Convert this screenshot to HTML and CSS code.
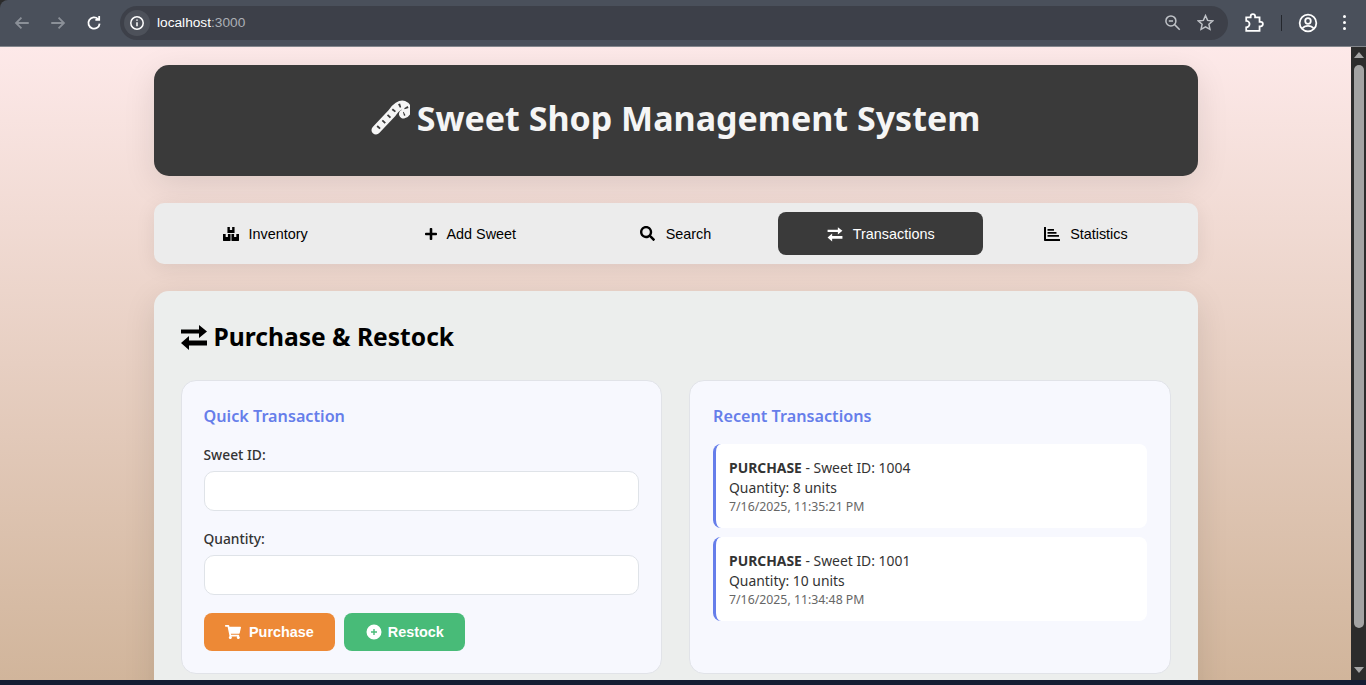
FILE: index.html
```html
<!doctype html>
<html>
<head>
<meta charset="utf-8">
<title>Sweet Shop Management System</title>
<link rel="stylesheet" href="styles.css">
</head>
<body>

<!-- browser toolbar -->
<div class="toolbar">
	<svg class="tb-icon dim" viewBox="0 0 16 16"><path d="M14 8H3M7.500 3.200 2.700 8l4.800 4.800"/></svg>
	<svg class="tb-icon dim" viewBox="0 0 16 16"><path d="M2 8h11M8.500 3.200 13.300 8l-4.800 4.800"/></svg>
	<svg class="tb-icon" viewBox="0 0 16 16"><path d="M13 8.500A5 5 0 1 1 11.600 4.500M12.600 1.800v3.400H9.200"/></svg>
	<div class="omnibox">
		<span class="site-info"><svg viewBox="0 0 16 16"><circle cx="8" cy="8" r="6.200"/><path d="M8 7.200v4M8 4.400v1.400"/></svg></span>
		<span class="url">localhost<span class="port">:3000</span></span>
		<svg class="omni-icon" viewBox="0 0 16 16"><circle cx="6.500" cy="6.500" r="4.700"/><path d="M4.500 6.500h4M10 10l4.800 4.800"/></svg>
		<svg class="omni-icon star" viewBox="0 0 16 16"><path d="M8 1.500l2 4.500 4.800.5-3.600 3.200 1 4.800L8 12.100 3.800 14.500l1-4.800L1.200 6.500 6 6z"/></svg>
	</div>
	<svg class="tb-icon ext" viewBox="0 0 18 18"><path d="M2 4h4V3a2 2 0 0 1 4 0v1h4v4h1a2 2 0 0 1 0 4h-1v4H2v-3a2 2 0 0 0 0-6z"/></svg>
	<span class="tb-sep"></span>
	<svg class="tb-icon ext" viewBox="0 0 18 18"><circle cx="9" cy="9" r="7.500"/><circle cx="9" cy="7.200" r="2.500"/><path d="M3.800 14c1.500-2 3.200-2.500 5.200-2.500s3.700.5 5.200 2.500"/></svg>
	<span class="dots"><i></i><i></i><i></i></span>
</div>

<div class="viewport">
	<div class="page">
		<div class="container">

			<header class="banner">
				<h1>
					<svg class="cane" viewBox="5 5 40 40">
						<path class="cane-body" d="M11 37 27 20C30 15 36 10 40 13 43 16 42 20 38.500 21"/>
						<path class="cane-stripe" d="M13 35 27 20C30 15 36 10 40 13 43 16 42 20 38.500 21"/>
					</svg>
					Sweet Shop Management System
				</h1>
			</header>

			<nav class="tabs">
				<button class="tab">
					<svg viewBox="0 0 18 16"><path d="M5 0h8v7H5zM7.700 0v3.500h2.600V0zM0 8h8.500v7a1 1 0 0 1-1 1H1a1 1 0 0 1-1-1zM3 8v3.500h2.500V8zM9.500 8H18v7a1 1 0 0 1-1 1h-6.500a1 1 0 0 1-1-1zM12.500 8v3.500H15V8z" fill-rule="evenodd"/></svg>
					Inventory
				</button>
				<button class="tab">
					<svg class="plus" viewBox="0 0 448 512"><path d="M416 208H272V64c0-17.670-14.330-32-32-32h-32c-17.670 0-32 14.330-32 32v144H32c-17.670 0-32 14.330-32 32v32c0 17.670 14.330 32 32 32h144v144c0 17.670 14.330 32 32 32h32c17.670 0 32-14.330 32-32V304h144c17.670 0 32-14.330 32-32v-32c0-17.670-14.330-32-32-32z"/></svg>
					Add Sweet
				</button>
				<button class="tab">
					<svg class="lens" viewBox="0 0 512 512"><path d="M505 442.700 405.300 343c-4.500-4.500-10.600-7-17-7H372c27.600-35.300 44-79.700 44-128C416 93.100 322.900 0 208 0S0 93.100 0 208s93.100 208 208 208c48.300 0 92.700-16.400 128-44v16.300c0 6.400 2.500 12.500 7 17l99.700 99.700c9.400 9.400 24.600 9.400 33.900 0l28.300-28.300c9.400-9.400 9.400-24.600.1-34zM208 336c-70.700 0-128-57.200-128-128 0-70.700 57.200-128 128-128 70.700 0 128 57.200 128 128 0 70.700-57.200 128-128 128z"/></svg>
					Search
				</button>
				<button class="tab active">
					<svg viewBox="-1 -1 28 28"><path d="M0 5.500h18V1l8 6.500-8 6.500V9.500H0zM26 16.500H8V12l-8 7 8 7v-4.500h18z"/></svg>
					Transactions
				</button>
				<button class="tab">
					<svg viewBox="0 0 512 512"><path d="M500 416c6.600 0 12 5.400 12 12v40c0 6.600-5.400 12-12 12H24c-13.300 0-24-10.700-24-24V44c0-6.600 5.400-12 12-12h40c6.600 0 12 5.400 12 12v372zM112 108c0-6.600 5.400-12 12-12h184c6.600 0 12 5.400 12 12v32c0 6.600-5.400 12-12 12H124c-6.600 0-12-5.400-12-12zM112 204c0-6.600 5.400-12 12-12h264c6.600 0 12 5.400 12 12v32c0 6.600-5.400 12-12 12H124c-6.600 0-12-5.400-12-12zM112 300c0-6.600 5.400-12 12-12h344c6.600 0 12 5.400 12 12v32c0 6.600-5.400 12-12 12H124c-6.600 0-12-5.400-12-12z"/></svg>
					Statistics
				</button>
			</nav>

			<main class="panel">
				<h2>
					<svg viewBox="0 0 26 26"><path d="M0 5.500h18V1l8 6.500-8 6.500V9.500H0zM26 16.500H8V12l-8 7 8 7v-4.500h18z"/></svg>
					Purchase &amp; Restock
				</h2>

				<div class="columns">
					<section class="card">
						<h3>Quick Transaction</h3>
						<div class="field">
							<label>Sweet ID:</label>
							<input type="text">
						</div>
						<div class="field">
							<label>Quantity:</label>
							<input type="text">
						</div>
						<div class="actions">
							<button class="btn btn-orange">
								<svg viewBox="0 0 576 512"><path d="M528.120 301.319l47.273-208C578.806 78.301 567.391 64 551.990 64H159.208l-9.166-44.810C147.758 8.021 137.930 0 126.529 0H24C10.745 0 0 10.745 0 24v16c0 13.255 10.745 24 24 24h69.883l70.248 343.435C147.325 417.100 136 435.222 136 456c0 30.928 25.072 56 56 56s56-25.072 56-56c0-15.674-6.447-29.835-16.824-40h209.647C430.447 426.165 424 440.326 424 456c0 30.928 25.072 56 56 56s56-25.072 56-56c0-22.172-12.888-41.332-31.579-50.405l5.517-24.276c3.413-15.018-8.002-29.319-23.403-29.319H218.117l-6.545-32h293.145c11.206 0 20.920-7.754 23.403-18.681z"/></svg>
								Purchase
							</button>
							<button class="btn btn-green">
								<svg viewBox="0 0 16 16"><path fill-rule="evenodd" d="M8 .5a7.500 7.500 0 1 0 0 15 7.500 7.500 0 0 0 0-15zM7.300 5h1.400v2.300H11v1.400H8.700V11H7.300V8.700H5V7.300h2.300z"/></svg>
								Restock
							</button>
						</div>
					</section>

					<section class="card card-recent">
						<h3>Recent Transactions</h3>
						<div class="tx">
							<div><strong>PURCHASE</strong> - Sweet ID: 1004</div>
							<div>Quantity: 8 units</div>
							<small>7/16/2025, 11:35:21 PM</small>
						</div>
						<div class="tx">
							<div><strong>PURCHASE</strong> - Sweet ID: 1001</div>
							<div>Quantity: 10 units</div>
							<small>7/16/2025, 11:34:48 PM</small>
						</div>
					</section>
				</div>
			</main>

		</div>
	</div>

	<div class="scrollbar">
		<span class="arrow-up"></span>
		<span class="thumb"></span>
		<span class="arrow-down"></span>
	</div>
</div>

<div class="taskbar"></div>

</body>
</html>
```

FILE: styles.css
```css
*{ margin:0; padding:0; box-sizing:border-box;}
html,body{ height:100%; overflow:hidden;}
body{ display:flex; flex-direction:column; font-family:"Noto Sans","Open Sans",sans-serif; background:#2b2b2b;}

/* browser toolbar */
.toolbar{ height:47px; flex:none; display:flex; align-items:center; padding:0 17px 1px 13px; background:#4a505b; border-bottom:1px solid #83868c; border-top-left-radius:8px; color:#fff; font-family:"Liberation Sans",sans-serif;}
.tb-icon{ width:18px; height:18px; flex:none; fill:none; stroke:#fff; stroke-width:1.6; margin-right:18px;}
.tb-icon.dim{ stroke:#8b9098;}
.omnibox{ flex:1; height:34px; margin:0 16px 0 -1px; display:flex; align-items:center; padding:0 14px 0 4px; background:#3d4049; border-radius:17px;}
.site-info{ width:26px; height:26px; border-radius:50%; background:#4d515a; display:flex; align-items:center; justify-content:center; margin-right:7px;}
.site-info svg{ width:16px; height:16px; fill:none; stroke:#fff; stroke-width:1.500;}
.url{ flex:1; font-size:13.700px; color:#fff;}
.port{ color:#abafb5;}
.omni-icon{ width:17px; height:17px; fill:none; stroke:#c0c3c8; stroke-width:1.400; margin-left:16px;}
.toolbar > .tb-icon.ext{ width:20px; height:20px; margin:0;}
.tb-sep{ width:1px; height:16px; background:#24272d; margin:0 16px 0 17px;}
.dots{ display:flex; flex-direction:column; gap:3px; margin:0 3px 0 25px;}
.dots i{ width:3px; height:3px; border-radius:50%; background:#fff;}

/* viewport */
.viewport{ flex:1; min-height:0; display:flex;}
.page{ flex:1; min-width:0; overflow:hidden; padding-top:18px; background:linear-gradient(180deg,#fde9e9 0%,#d1b59b 100%);}
.container{ width:1044px; margin:0 auto;}

.scrollbar{ width:15px; flex:none; display:flex; flex-direction:column; align-items:center; background:#2c2c2c; padding-top:5px;}
.arrow-up{ width:0; height:0; border:5px solid transparent; border-top:0; border-bottom:6px solid #a5a5a5;}
.thumb{ width:10px; height:563px; margin-top:7px; border-radius:5px; background:#a3a3a3;}
.arrow-down{ width:0; height:0; margin-top:39px; border:5px solid transparent; border-bottom:0; border-top:6px solid #a5a5a5;}

.taskbar{ height:5px; flex:none; background:#141d33;}

/* header */
.banner{ height:111px; display:flex; align-items:center; justify-content:center; padding:0 1px 5px 0; background:#3a3a3a; border-radius:15px; box-shadow:0 8px 32px rgba(0,0,0,.1); margin-bottom:27px;}
.banner h1{ display:flex; align-items:center; gap:7px; font-size:34px; font-weight:700; color:#f5f5f5;}
.cane{ width:40px; height:40px; fill:none;}
.cane-body{ stroke:#f5f5f5; stroke-width:9; stroke-linecap:round;}
.cane-stripe{ stroke:#3a3a3a; stroke-width:4; stroke-dasharray:1.800 5.800;}

/* tabs */
.tabs{ height:61px; display:flex; padding:9px; background:#ececec; border-radius:10px; box-shadow:0 4px 20px rgba(0,0,0,.08); margin-bottom:27px;}
.tab{ flex:1; display:flex; align-items:center; justify-content:center; gap:10px; border:0; border-radius:8px; background:none; font-family:"Liberation Sans",sans-serif; font-size:14.400px; color:#000;}
.tab svg{ width:16px; height:16px; flex:none;}
.tab svg.plus{ width:12px; height:14px;}
.tab svg.lens{ width:15px; height:15px; margin-right:1px;}
.tab.active{ background:#3a3a3a; color:#fff;}
.tab.active svg{ fill:#fff;}

/* panel */
.panel{ height:420px; padding:27px; background:#eceeed; border-radius:15px; box-shadow:0 8px 32px rgba(0,0,0,.1);}
.panel h2{ display:flex; align-items:center; gap:7px; font-size:24.600px; font-weight:700; color:#000; line-height:38px; margin-bottom:24px;}
.panel h2 svg{ width:26px; height:26px; flex:none;}
.columns{ display:grid; grid-template-columns:1fr 1fr; gap:27px; height:294px;}
.card{ padding:22px; background:#f7f8fe; border:1px solid #e1e3e8; border-radius:15px;}
.card h3{ font-size:16.200px; font-weight:600; line-height:26px; color:#667eea; margin-bottom:16px;}
.field{ margin-bottom:18px;}
.field label{ display:block; font-size:13.800px; font-weight:500; line-height:20px; color:#333; margin-bottom:6px;}
.field input{ display:block; width:100%; height:39.500px; background:#fff; border:1px solid #dfe3e8; border-radius:10px;}
.field + .field{ margin-top:1px;}
.field + .field input{ height:40px;}
.actions{ display:flex; gap:9px;}
.btn{ height:38px; display:flex; align-items:center; gap:8px; padding:0 21.500px; border:0; border-radius:8px; font-family:"Liberation Sans",sans-serif; font-size:14.400px; font-weight:700; color:#fff;}
.btn svg{ width:16px; height:16px; flex:none; fill:#fff;}
.btn-orange{ background:#ed8936;}
.btn-green{ background:#48bb78; gap:6px;}

/* recent transactions */
.card-recent{ padding-left:23px;}
.card-recent h3{ margin-bottom:15px;}
.tx{ height:84px; padding:14px 16px 0 13px; margin:0 1px 9px 0; background:#fff; border-left:3px solid #667eea; border-radius:8px; font-size:13.900px; line-height:20px; color:#333;}
.tx strong{ font-weight:700;}
.tx small{ display:block; font-size:12.300px; line-height:18px; color:#666;}
```
